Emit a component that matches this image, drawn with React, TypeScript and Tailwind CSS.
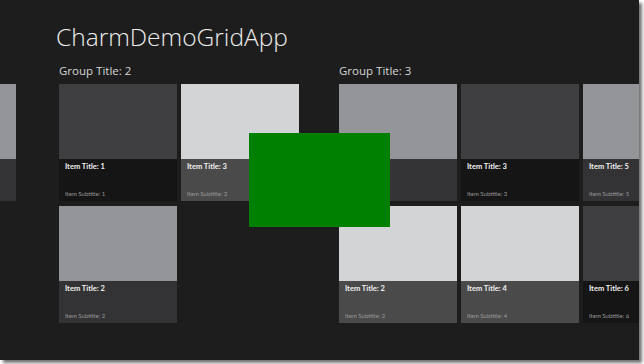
import React from "react";

type Item = { title: string; sub: string; img: string; bar: string };

const DARK = { img: "bg-[#3f3f41]", bar: "bg-[#151515]" };
const LIGHT = { img: "bg-[#d3d4d6]", bar: "bg-[#4a4a4b]" };
const MID = { img: "bg-[#949598]", bar: "bg-[#333335]" };

const mk = (n: number, c: { img: string; bar: string }, hideText = false): Item => ({
  title: hideText ? "" : `Item Title: ${n}`,
  sub: hideText ? "" : `Item Subtitle: ${n}`,
  img: c.img,
  bar: c.bar,
});

function Tile({ item }: { item: Item }) {
  return (
    <div className="flex w-[118px] h-[117px] flex-col">
      <div className={`h-[75px] ${item.img}`} />
      <div className={`flex h-[42px] flex-col justify-between px-[6px] pt-[3px] pb-[3px] ${item.bar}`}>
        <div className="h-[10px] text-[7.5px] font-bold leading-[10px] text-[#f2f2f2]" style={{ fontFamily: "Lato, 'Open Sans', sans-serif" }}>
          {item.title}
        </div>
        <div className="h-[8px] text-[6px] leading-[8px] text-[#9a9a9a]" style={{ fontFamily: "Lato, 'Open Sans', sans-serif" }}>
          {item.sub}
        </div>
      </div>
    </div>
  );
}

function Group({ title, items, className = "" }: { title?: string; items: Item[]; className?: string }) {
  return (
    <div className={`flex flex-col ${className}`}>
      <div className="h-[20px] text-[11.5px] leading-[14px] text-[#d6d6d6] font-['Open_Sans',sans-serif] whitespace-nowrap">
        {title ?? "\u00a0"}
      </div>
      <div className="grid grid-flow-col grid-rows-2 gap-x-[4px] gap-y-[5px] w-max">
        {items.map((it, i) => (
          <Tile key={i} item={it} />
        ))}
      </div>
    </div>
  );
}

export default function App() {
  return (
    <div className="w-[644px] h-[364px] bg-white">
      <div className="relative w-[639px] h-[360px] overflow-hidden bg-[#1d1d1d] shadow-[3px_3px_3px_rgba(0,0,0,0.55)]">
        <div className="pl-[56px] pt-[22px] h-[64px] text-[24.5px] font-light leading-[30px] text-[#ededed] font-['Open_Sans',sans-serif]">
          CharmDemoGridApp
        </div>
        <div className="flex items-start ml-[-102px]">
          <Group items={[mk(5, MID, true)]} className="mr-[43px]" />
          <Group title="Group Title: 2" items={[mk(1, DARK), mk(2, MID), mk(3, LIGHT)]} className="mr-[40px]" />
          <Group
            title="Group Title: 3"
            items={[mk(1, MID), mk(2, LIGHT), mk(3, DARK), mk(4, LIGHT), mk(5, MID), mk(6, DARK)]}
          />
        </div>
        <div className="absolute left-[249px] top-[133px] w-[141px] h-[94px] bg-[#008000]" />
      </div>
    </div>
  );
}
